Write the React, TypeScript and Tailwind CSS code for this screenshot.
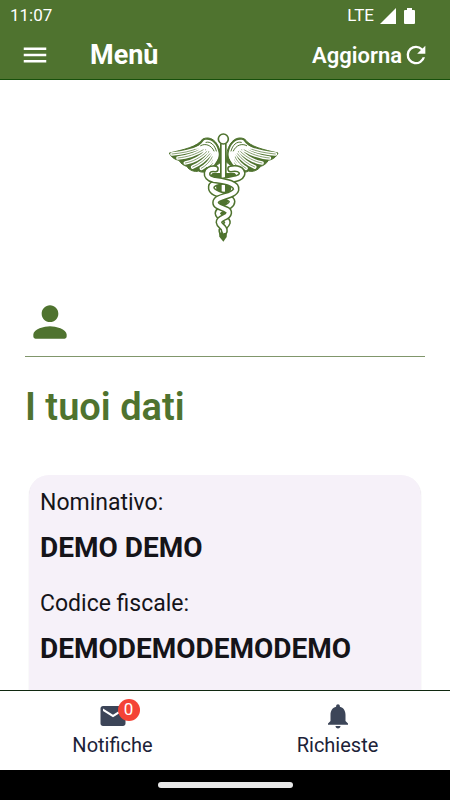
import React from "react";

const snakeA =
  "M166 132 C136 128 132 158 160 164 C196 170 232 174 228 194 C222 216 168 212 167 232 C166 250 208 248 206 264 C204 280 176 276 177 292 C178 304 194 304 193 318";
const snakeB =
  "M212 132 C246 126 256 148 236 158 C206 170 150 166 154 190 C158 212 214 210 216 230 C215 250 174 248 174 265 C175 281 204 279 202 293 C199 304 186 306 186 318";
const wingBase =
  "M180 78 C172 46 150 32 128 42 C112 66 70 74 28 84 C34 98 46 104 57 106 C62 116 72 122 80 124 C88 136 104 142 116 138 C128 146 148 138 158 130 L182 112 Z";
const shoulder = "M176 84 C170 52 150 40 132 46 C122 60 112 66 100 71 C124 72 140 70 150 82 C158 92 162 104 158 116 C170 110 178 98 176 84 Z";
const feathers =
  "M36 87 C66 84 92 80 118 68 M54 99 C82 96 108 88 130 74 M76 114 C98 110 122 98 140 80 M98 126 C118 118 136 104 150 86 M124 130 C138 122 150 110 158 94 M146 126 C156 120 164 110 168 98";
const shoulderLines = "M122 62 C136 54 154 60 162 78 M138 52 C152 48 164 60 169 78";

function Caduceus() {
  return (
    <svg viewBox="0 0 378 375" className="h-[125px] w-[126px]" role="img" aria-label="Caduceo" fill="none" strokeLinecap="round" strokeLinejoin="round">
      {["", "translate(382 0) scale(-1 1)"].map((t) => (
        <g key={t} transform={t} stroke="#4f732f">
          <path d={wingBase} fill="#4f732f" strokeWidth="3" />
          <path d={feathers} stroke="#fff" strokeWidth="11" />
          <path d={feathers} strokeWidth="2" />
          <path d={shoulder} fill="#fff" stroke="none" />
          <path d={shoulderLines} strokeWidth="3" />
        </g>
      ))}
      <path d="M158 144 L224 144 L232 154 L194 164 L150 152 Z M168 178 L216 180 L212 198 L190 210 L169 196 Z M178 224 L206 224 L202 236 L190 244 L178 236 Z M182 258 L198 258 L194 270 L184 270 Z" fill="#4f732f" />
      <path d="M190 55 V205" stroke="#4f732f" strokeWidth="20" strokeLinecap="butt" />
      <path d="M190 55 V200" stroke="#fff" strokeWidth="10" strokeLinecap="butt" />
      <circle cx="190" cy="42" r="15" fill="#fff" stroke="#4f732f" strokeWidth="5" />
      <path d="M176 312 L202 308 L200 336 L190 350 L178 335 Z" fill="#4f732f" />
      <path d={snakeB} stroke="#4f732f" strokeWidth="21" />
      <path d={snakeB} stroke="#fff" strokeWidth="12" />
      <path d={snakeA} stroke="#4f732f" strokeWidth="21" />
      <path d={snakeA} stroke="#fff" strokeWidth="12" />
      <path d="M188 315 L196 316 L191 326 Z" fill="#fff" />
    </svg>
  );
}

function Field({ label, value }: { label: string; value: string }) {
  return (
    <div className="mb-5">
      <dt className="text-[23px] leading-9">{label}</dt>
      <dd className="mt-2 text-[28px] font-bold leading-[37px]">{value}</dd>
    </div>
  );
}

export default function App() {
  return (
    <div className="flex h-screen flex-col overflow-hidden bg-white font-[Roboto,sans-serif] text-[#151419]">
      <header className="shrink-0 border-b border-[#17500b] bg-[#4f732f] text-white">
        <div className="flex h-8 items-center justify-between pl-2.5 pr-[35px]">
          <span className="text-[17px]">11:07</span>
          <div className="flex items-center">
            <span className="text-[17px]">LTE</span>
            <svg viewBox="0 0 16 16" className="ml-1.5 size-4" fill="#fff" aria-hidden="true">
              <path d="M16 0V16H0Z" />
            </svg>
            <svg viewBox="0 0 11 16" className="ml-2 h-4 w-[11px]" fill="#fff" aria-hidden="true">
              <path d="M3 0H8V2H10Q11 2 11 3V15Q11 16 10 16H1Q0 16 0 15V3Q0 2 1 2H3Z" />
            </svg>
          </div>
        </div>
        <div className="flex h-[47px] items-center px-5 pb-px">
          <button type="button" aria-label="Apri menu">
            <svg viewBox="0 0 24 24" className="size-[30px]" fill="#fff" aria-hidden="true">
              <path d="M3 18h18v-2H3v2zm0-5h18v-2H3v2zm0-7v2h18V6H3z" />
            </svg>
          </button>
          <h1 className="ml-10 text-[27px] font-bold">Menù</h1>
          <button type="button" className="ml-auto flex items-center text-[22px] font-semibold">
            Aggiorna
            <svg viewBox="0 0 24 24" className="size-7" fill="#fff" aria-hidden="true">
              <path d="M17.65 6.35A7.96 7.96 0 0 0 12 4a8 8 0 1 0 7.73 10h-2.08A6 6 0 1 1 12 6c1.66 0 3.14.69 4.22 1.78L13 11h7V4l-2.35 2.35z" />
            </svg>
          </button>
        </div>
      </header>

      <main className="min-h-0 flex-1 overflow-hidden px-[25px]">
        <div className="flex justify-center pr-1 pt-[45px]">
          <Caduceus />
        </div>
        <div className="mt-[47px] border-b border-[#80966b] pb-[9px]">
          <svg viewBox="0 0 24 24" className="size-[50px]" fill="#4f732f" aria-hidden="true">
            <path d="M12 12c2.21 0 4-1.79 4-4s-1.79-4-4-4-4 1.79-4 4 1.79 4 4 4zm0 2c-2.67 0-8 1.34-8 4v1q0 1 1 1h14q1 0 1-1v-1c0-2.66-5.33-4-8-4z" />
          </svg>
        </div>
        <h2 className="mt-6 text-[38px] font-semibold leading-[52px] text-[#4f732f]">I tuoi dati</h2>
        <dl className="mx-1 mt-[42px] rounded-[20px] bg-[#f6f1f9] px-[11px] pb-10 pt-2.5 shadow-[0_1px_1px_rgba(0,0,0,0.2)]">
          <Field label="Nominativo:" value="DEMO DEMO" />
          <Field label="Codice fiscale:" value="DEMODEMODEMODEMO" />
        </dl>
      </main>

      <nav className="grid h-20 shrink-0 grid-cols-2 border-t border-[#102810] bg-white text-[20px] text-[#1c2238]">
        <button type="button" className="flex flex-col items-center pt-2.5">
          <span className="relative">
            <svg viewBox="0 0 24 24" className="size-[30px]" fill="#3c4558" aria-hidden="true">
              <path d="M20 4H4c-1.100 0-2 .9-2 2v12c0 1.100.9 2 2 2h16c1.100 0 2-.9 2-2V6c0-1.100-.9-2-2-2zm0 4l-8 5-8-5V6l8 5 8-5v2z" />
            </svg>
            <span className="absolute -right-3 -top-0.5 flex size-[22px] items-center justify-center rounded-full bg-[#f44336] text-[17px] text-white">0</span>
          </span>
          <span className="leading-7">Notifiche</span>
        </button>
        <button type="button" className="flex flex-col items-center pt-2.5">
          <svg viewBox="0 0 24 24" className="size-[30px]" fill="#3c4558" aria-hidden="true">
            <path d="M12 22c1.100 0 2-.9 2-2h-4c0 1.100.9 2 2 2zm6-6v-5c0-3.070-1.640-5.640-4.500-6.320V4c0-.83-.67-1.500-1.500-1.500s-1.500.67-1.500 1.500v.68C7.630 5.360 6 7.920 6 11v5l-2 2v1h16v-1l-2-2z" />
          </svg>
          <span className="leading-7">Richieste</span>
        </button>
      </nav>
      <div className="flex h-[30px] shrink-0 items-center justify-center bg-black">
        <div className="h-1.5 w-[30%] rounded-full bg-[#e8e8e8]" />
      </div>
    </div>
  );
}
